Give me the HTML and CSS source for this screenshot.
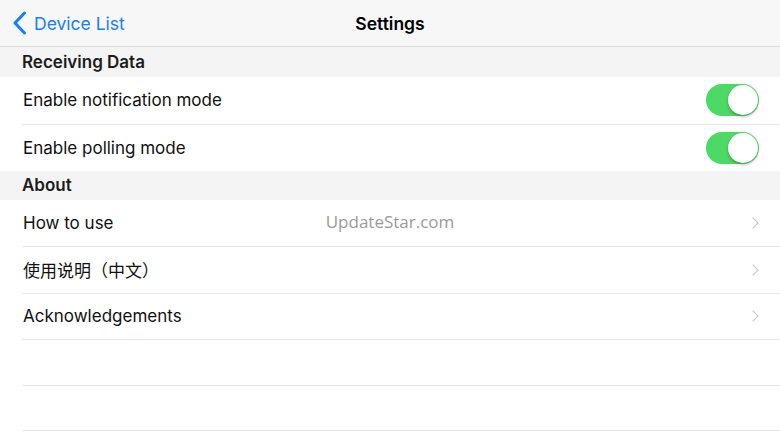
FILE: index.html
```html
<!DOCTYPE html>
<html>
<head>
    <title>Settings</title>
    <meta charset="utf-8">
    <meta name="viewport" content="width=device-width, initial-scale=1">
    <link rel="stylesheet" href="styles.css">
</head>
<body>
    <div class="navbar">
        <a class="back" href="#">
            <svg class="back-icon" width="14" height="24" viewBox="0 0 14 24">
                <path d="M11.5 2 L2 12 L11.5 22" fill="none" stroke="#147efb" stroke-width="3" stroke-linecap="round" stroke-linejoin="round"/>
            </svg>
            <span>Device List</span>
        </a>
        <div class="title">Settings</div>
    </div>

    <div class="section-header">Receiving Data</div>
    <div class="row tall">
        <span class="label">Enable notification mode</span>
        <span class="switch on"><span class="knob"></span></span>
    </div>
    <div class="row tall">
        <span class="label">Enable polling mode</span>
        <span class="switch on"><span class="knob"></span></span>
    </div>

    <div class="section-header">About</div>
    <div class="list">
        <div class="row link">
            <span class="label">How to use</span>
            <span class="chevron"></span>
        </div>
        <div class="row link">
            <span class="label">使用说明（中文）</span>
            <span class="chevron"></span>
        </div>
        <div class="row link">
            <span class="label">Acknowledgements</span>
            <span class="chevron"></span>
        </div>
        <div class="row empty"></div>
        <div class="row empty last"></div>
        <div class="watermark">UpdateStar.com</div>
    </div>
</body>
</html>
```
FILE: styles.css
```css
body {
    margin: 0;
    background: #fff;
    font-family: "Inter", "Liberation Sans", "Noto Sans CJK SC", sans-serif;
    color: #000;
    overflow: hidden;
}
.navbar {
    height: 46px;
    background: #f7f7f7;
    border-bottom: 1px solid #dcdcdc;
    position: relative;
    display: flex;
    align-items: center;
    justify-content: center;
}
.back {
    position: absolute;
    left: 13px;
    top: 11px;
    display: flex;
    align-items: center;
    gap: 7px;
    color: #147efb;
    text-decoration: none;
    font-size: 17.5px;
}
.back-icon {
    display: block;
}
.title {
    font-size: 17.5px;
    font-weight: 600;
}
.section-header {
    height: 29.5px;
    background: #f4f4f4;
    padding-left: 22px;
    display: flex;
    align-items: center;
    font-size: 17px;
    font-weight: 600;
    color: #1c1c1c;
}
.row {
    height: 46.3px;
    box-sizing: border-box;
    margin-left: 22px;
    padding-left: 1px;
    padding-right: 20px;
    display: flex;
    align-items: center;
    justify-content: space-between;
    font-size: 17px;
    color: #111;
}
.row.tall {
    height: 47px;
}
.row + .row {
    border-top: 1px solid #e6e6e6;
}
.list {
    position: relative;
}
.row.last {
    border-bottom: 1px solid #e6e6e6;
}
.switch {
    width: 53px;
    height: 32px;
    border-radius: 16px;
    background: #4cd964;
    position: relative;
    margin-right: 1px;
}
.switch .knob {
    position: absolute;
    right: 1px;
    top: 1px;
    width: 30px;
    height: 30px;
    border-radius: 50%;
    background: #fff;
    box-shadow: 0 2px 3px rgba(0, 0, 0, 0.25);
}
.chevron {
    width: 7px;
    height: 7px;
    border-top: 1.5px solid #c4c4c9;
    border-right: 1.5px solid #c4c4c9;
    transform: rotate(45deg);
    margin-right: 3px;
}
.watermark {
    position: absolute;
    top: 10px;
    left: 0;
    right: 0;
    text-align: center;
    font-family: "Open Sans", "Liberation Sans", sans-serif;
    font-size: 17px;
    color: #9a9a9a;
}
```
